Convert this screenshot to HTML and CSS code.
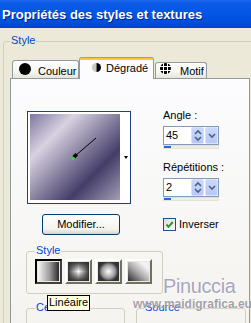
FILE: index.html
```html
<!DOCTYPE html>
<html>
<head>
    <meta charset="utf-8">
    <link rel="stylesheet" href="styles.css">
</head>
<body>
    <div class="window">
        <div class="titlebar">Propriétés des styles et textures</div>

        <fieldset class="group group-outer">
            <legend>Style</legend>

            <div class="tabs">
                <div class="tab tab-couleur"><span class="dot"></span>Couleur</div>
                <div class="tab tab-active">
                    <svg class="tab-icon icon-grad" width="9" height="9" viewBox="0 0 9 9">
                        <path d="M4.5 0 A4.5 4.5 0 0 0 4.5 9 Z" fill="#c8c8c4"/>
                        <path d="M4.5 0 A4.5 4.5 0 0 1 4.5 9 Z" fill="#000"/>
                    </svg>Dégradé
                </div>
                <div class="tab tab-motif">
                    <svg class="tab-icon icon-motif" width="11" height="11" viewBox="0 0 11 11">
                        <circle cx="5.5" cy="5.5" r="5.5" fill="#000"/>
                        <path d="M3.5 0 V11 M7.5 0 V11 M0 3.5 H11 M0 7.5 H11" stroke="#fff" stroke-width="1"/>
                    </svg>Motif
                </div>
            </div>

            <div class="panel">
                <div class="panel-top">
                    <div class="col-left">
                        <div class="preview">
                            <div class="gradient">
                                <svg width="90" height="86" viewBox="0 0 90 86">
                                    <line x1="45" y1="42" x2="66" y2="24" stroke="#000" stroke-width="1"/>
                                    <path d="M42.5 42 L45.5 39 L48 41.5 L45 44.5 Z" fill="#000"/>
                                    <rect x="41.5" y="43" width="3" height="3" fill="#2fe02f"/>
                                </svg>
                            </div>
                            <span class="drop-arrow"></span>
                        </div>
                        <button class="btn">Modifier...</button>
                    </div>

                    <div class="col-right">
                        <div class="field-label">Angle :</div>
                        <div class="spin">
                            <div class="spin-box">
                                <span class="spin-value">45</span>
                                <span class="spin-btn">
                                    <svg width="10" height="15" viewBox="0 0 10 15">
                                        <path d="M2 6 L5 3 L8 6 M2 9 L5 12 L8 9" fill="none" stroke="#4d6185" stroke-width="1.6"/>
                                    </svg>
                                </span>
                                <span class="spin-btn">
                                    <svg width="10" height="15" viewBox="0 0 10 15">
                                        <path d="M2 6 L5 9 L8 6" fill="none" stroke="#4d6185" stroke-width="1.6"/>
                                    </svg>
                                </span>
                            </div>
                            <div class="spin-track"><span class="spin-fill"></span></div>
                        </div>

                        <div class="field-label field-label-second">Répétitions :</div>
                        <div class="spin">
                            <div class="spin-box">
                                <span class="spin-value">2</span>
                                <span class="spin-btn">
                                    <svg width="10" height="15" viewBox="0 0 10 15">
                                        <path d="M2 6 L5 3 L8 6 M2 9 L5 12 L8 9" fill="none" stroke="#4d6185" stroke-width="1.6"/>
                                    </svg>
                                </span>
                                <span class="spin-btn">
                                    <svg width="10" height="15" viewBox="0 0 10 15">
                                        <path d="M2 6 L5 9 L8 6" fill="none" stroke="#4d6185" stroke-width="1.6"/>
                                    </svg>
                                </span>
                            </div>
                            <div class="spin-track"><span class="spin-fill"></span></div>
                        </div>

                        <label class="check-row">
                            <span class="checkbox">
                                <svg width="11" height="11" viewBox="0 0 11 11">
                                    <path d="M2.5 5.5 L4.5 7.8 L8.8 3" fill="none" stroke="#21a121" stroke-width="2"/>
                                </svg>
                            </span>Inverser
                        </label>
                    </div>
                </div>

                <fieldset class="group group-style">
                    <legend>Style</legend>
                    <div class="style-buttons">
                        <span class="style-btn pressed"><span class="swatch swatch-linear"></span></span>
                        <span class="style-btn"><span class="swatch swatch-rect"></span></span>
                        <span class="style-btn"><span class="swatch swatch-radial"></span></span>
                        <span class="style-btn"><span class="swatch swatch-corner"></span></span>
                    </div>
                </fieldset>

                <div class="group-row">
                    <fieldset class="group group-centre"><legend>Centre</legend></fieldset>
                    <fieldset class="group group-source"><legend>Source</legend></fieldset>
                </div>
            </div>
        </fieldset>

        <div class="tooltip">Linéaire</div>

        <span class="wm-name">Pinuccia</span>
        <span class="wm-url">www.maidigrafica.eu</span>
    </div>
</body>
</html>
```

FILE: styles.css
```css
html, body {
    margin: 0;
    padding: 0;
    overflow: hidden;
}

body {
    font-family: 'Liberation Sans', Arial, sans-serif;
    font-size: 11px;
    color: #000;
    background: #ECE9D8;
}

.window {
    position: relative;
    width: 251px;
    height: 323px;
    overflow: hidden;
    background: #ECE9D8;
}

.titlebar {
    height: 26px;
    padding: 2px 0 0 2px;
    line-height: 26px;
    font-size: 13px;
    font-weight: bold;
    color: #fff;
    white-space: nowrap;
    text-shadow: 1px 1px 0 #0a1f8a;
    background: linear-gradient(#1a66ec, #0a5ae6 15%, #0055e2 55%, #004bd6 90%, #0042c4);
}

/* group boxes */

.group {
    margin: 0;
    min-width: 0;
    box-sizing: border-box;
    border: 1px solid #D0D0BF;
    border-radius: 3px;
}

.group legend {
    padding: 0 1px 2px;
    line-height: 13px;
    color: #0046D5;
}

.group-outer {
    width: 256px;
    height: 300px;
    margin: 6px 0 0 3px;
    padding: 8px 0 0 6px;
}

/* tabs */

.tabs {
    display: flex;
    align-items: flex-end;
    height: 21px;
    margin-left: 2px;
}

.tab {
    box-sizing: border-box;
    display: flex;
    align-items: flex-start;
    line-height: 13px;
    border: 1px solid #919B9C;
    border-bottom: none;
    border-radius: 3px 3px 0 0;
    background: linear-gradient(#fff, #f5f5f1 60%, #e6e5dc);
    white-space: nowrap;
}

.tab-couleur {
    width: 67px;
    height: 18px;
    padding: 4px 0 0 6px;
}

.dot {
    width: 12px;
    height: 12px;
    margin: -2px 7px 0 0;
    border-radius: 50%;
    background: #000;
}

.tab-active {
    position: relative;
    z-index: 1;
    width: 75px;
    height: 22px;
    margin-bottom: -1px;
    padding: 5px 0 0 12px;
    border-top: none;
    background: linear-gradient(#e68b2c 0 1px, #ffc73c 1px 3px, #fcfcfe 3px);
}

.icon-grad {
    margin: 1px 5px 0 0;
}

.tab-motif {
    width: 52px;
    height: 16px;
    margin-left: 1px;
    padding: 2px 0 0 4px;
}

.icon-motif {
    margin: -2px 9px 0 0;
}

.panel {
    box-sizing: border-box;
    width: 240px;
    height: 260px;
    border: 1px solid #919B9C;
    background: linear-gradient(#fcfcfe, #f4f3ee);
}

.panel-top {
    display: flex;
    align-items: flex-start;
    gap: 32px;
    padding: 32px 0 0 16px;
}

/* gradient preview */

.col-left {
    width: 104px;
}

.preview {
    display: flex;
    align-items: center;
    width: 104px;
    box-sizing: border-box;
    border: 1px solid #1f3f80;
    padding: 2px 0 3px 2px;
    background: #fff;
}

.gradient {
    width: 90px;
    height: 86px;
    background: linear-gradient(135deg, #7f77a0 0px, #d9d2e1 32px, #433d69 88px, #d9d2e1 145px);
}

.gradient svg {
    display: block;
}

.drop-arrow {
    margin-left: 4px;
    width: 0;
    height: 0;
    border-left: 2.5px solid transparent;
    border-right: 2.5px solid transparent;
    border-top: 3px solid #000;
}

.btn {
    display: block;
    width: 78px;
    height: 21px;
    margin: 10px 0 0 15px;
    padding: 0;
    font: inherit;
    line-height: 19px;
    color: #000;
    border: 1px solid #003c74;
    border-radius: 3px;
    background: linear-gradient(#fff, #f3f3ef 75%, #d8d3c8);
}

/* angle / repetitions */

.col-right {
    width: 56px;
    margin-top: -2px;
}

.field-label {
    line-height: 13px;
    white-space: nowrap;
    margin-bottom: 4px;
}

.field-label-second {
    margin-top: 12px;
}

.spin-box {
    display: flex;
    box-sizing: border-box;
    height: 19px;
    border: 1px solid #7f9db9;
    background: #fff;
}

.spin-value {
    flex: 1;
    padding-left: 2px;
    line-height: 17px;
}

.spin-btn {
    width: 11px;
    margin: 0 0 0 1px;
    display: flex;
    align-items: center;
    justify-content: center;
    border: 1px solid #d8e2fa;
    border-radius: 2px;
    background: linear-gradient(#cad8fb, #b6c9f4);
}

.spin-btn svg {
    display: block;
}

.spin-track {
    height: 4px;
    box-sizing: border-box;
    border: 1px solid #e4e2d6;
    background: #efeee6;
}

.spin-fill {
    display: block;
    width: 7px;
    height: 2px;
    background: #3168c8;
}

.check-row {
    display: flex;
    align-items: center;
    gap: 3px;
    margin-top: 17px;
    line-height: 13px;
}

.checkbox {
    box-sizing: border-box;
    width: 13px;
    height: 13px;
    border: 1px solid #1c5180;
    background: linear-gradient(135deg, #dcdcd7, #fff);
}

.checkbox svg {
    display: block;
}

/* style sub group */

.group-style {
    width: 137px;
    margin: 9px 0 0 15px;
    padding: 0 0 9px 8px;
}

.style-buttons {
    display: flex;
    gap: 3px;
}

.style-btn {
    box-sizing: border-box;
    width: 27px;
    height: 25px;
    padding: 1px;
    border: 2px solid;
    border-color: #fff #716f64 #716f64 #fff;
    background: #ECE9D8;
}

.style-btn.pressed {
    border-color: #000 #404040 #404040 #000;
}

.swatch {
    display: block;
    width: 100%;
    height: 100%;
}

.swatch-linear {
    background: linear-gradient(to right, #f6f6f6, #9c9c9c 55%, #2a2a2a);
}

.swatch-rect {
    background:
        linear-gradient(to right, rgba(45, 45, 45, 0.95), rgba(45, 45, 45, 0) 50%, rgba(45, 45, 45, 0.95)),
        linear-gradient(rgba(45, 45, 45, 0.95), rgba(45, 45, 45, 0) 50%, rgba(45, 45, 45, 0.95)),
        #fff;
}

.swatch-radial {
    background: radial-gradient(circle closest-side, #fff, #9a9a9a 70%, #3a3a3a 100%, #333);
}

.swatch-corner {
    background: linear-gradient(to bottom left, #f2f2f2 20%, #a8a8a8 55%, #2a2a2a);
}

.group-row {
    display: flex;
    gap: 11px;
    margin: 7px 0 0 15px;
}

.group-centre {
    width: 99px;
    height: 40px;
    padding: 0 0 0 8px;
}

.group-source {
    width: 110px;
    height: 40px;
    padding: 0 0 0 7px;
}

/* overlays */

.tooltip {
    position: absolute;
    left: 47px;
    top: 295px;
    padding: 0 1px 1px;
    line-height: 13px;
    border: 1px solid #000;
    background: #ffffe1;
    white-space: nowrap;
}

.wm-name {
    position: absolute;
    left: 163px;
    top: 276px;
    font-size: 20px;
    line-height: 20px;
    letter-spacing: -0.4px;
    color: rgba(120, 118, 160, 0.65);
    text-shadow: 1px 1px 0 rgba(255, 255, 255, 0.7);
    white-space: nowrap;
}

.wm-url {
    position: absolute;
    left: 133px;
    top: 297px;
    font-size: 12px;
    font-weight: bold;
    line-height: 14px;
    color: rgba(120, 120, 135, 0.7);
    text-shadow: 0 0 2px rgba(255, 255, 255, 0.9);
    white-space: nowrap;
}
```
